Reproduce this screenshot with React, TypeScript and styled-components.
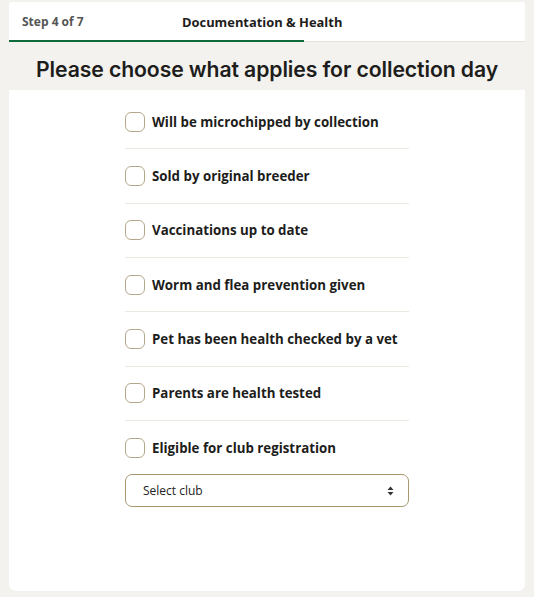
import React from 'react';
import styled, { createGlobalStyle } from 'styled-components';

const GlobalStyle = createGlobalStyle`
  body {
    margin: 0;
    background: #f3f2ee;
    font-family: "Open Sans", "Liberation Sans", sans-serif;
    color: #1d1d1b;
  }
`;

const Page = styled.div`
  padding: 2px 9px 6px;
  display: flex;
  flex-direction: column;
  height: 597px;
  box-sizing: border-box;
`;

const Header = styled.div`
  position: relative;
  background: #fff;
  height: 40px;
  border-bottom: 1px solid #e6e3de;
  border-radius: 3px 3px 0 0;
  display: flex;
  align-items: center;
  box-sizing: border-box;
  padding: 0 0 0 13px;
`;

const StepLabel = styled.span`
  font-size: 12px;
  font-weight: 700;
  color: #555;
  width: 160px;
`;

const StepTitle = styled.span`
  font-size: 12.9px;
  font-weight: 700;
  color: #1d1d1b;
`;

const Progress = styled.div`
  position: absolute;
  left: 0;
  bottom: -1px;
  height: 2px;
  background: #0d6a3a;
`;

const Heading = styled.h1`
  margin: 0;
  height: 48px;
  padding-top: 6px;
  box-sizing: border-box;
  display: flex;
  align-items: center;
  justify-content: center;
  font-family: Inter, sans-serif;
  font-size: 21.2px;
  font-weight: 600;
  letter-spacing: -0.1px;
  color: #1d1d1b;
`;

const Card = styled.div`
  flex: 1;
  background: #fff;
  border-radius: 0 0 7px 7px;
  padding-top: 5px;
`;

const List = styled.div`
  width: 284px;
  margin: 0 auto;
`;

const Row = styled.label<{ last?: boolean }>`
  display: flex;
  align-items: center;
  gap: 7px;
  padding: 16.67px 0;
  border-bottom: ${(p) => (p.last ? 'none' : '1px solid #ece8e2')};
`;

const Box = styled.span`
  width: 20px;
  height: 20px;
  box-sizing: border-box;
  border: 1.5px solid #b5a78b;
  border-radius: 6px;
  flex-shrink: 0;
`;

const Label = styled.span`
  font-size: 13.3px;
  font-weight: 700;
  line-height: 20px;
`;

const Select = styled.div`
  height: 33px;
  box-sizing: border-box;
  border: 1px solid #a8976f;
  border-radius: 7px;
  display: flex;
  align-items: center;
  justify-content: space-between;
  padding: 0 14px 0 17px;
  font-size: 12px;
  color: #222;
`;

const items = [
  'Will be microchipped by collection',
  'Sold by original breeder',
  'Vaccinations up to date',
  'Worm and flea prevention given',
  'Pet has been health checked by a vet',
  'Parents are health tested',
  'Eligible for club registration',
];

const Arrows = () => (
  <svg width="7" height="10" viewBox="0 0 7 10">
    <path d="M3.5 0.5 L6.5 4 H0.5 Z" fill="#333" />
    <path d="M3.5 9.5 L6.5 6 H0.5 Z" fill="#333" />
  </svg>
);

const App: React.FC = () => {
  const step = 4;
  const total = 7;
  return (
    <>
      <GlobalStyle />
      <Page>
        <Header>
          <StepLabel>Step {step} of {total}</StepLabel>
          <StepTitle>Documentation &amp; Health</StepTitle>
          <Progress style={{ width: `${(step / total) * 100}%` }} />
        </Header>
        <Heading>Please choose what applies for collection day</Heading>
        <Card>
          <List>
            {items.map((text, i) => (
              <Row key={text} last={i === items.length - 1}>
                <Box />
                <Label>{text}</Label>
              </Row>
            ))}
            <Select>
              <span>Select club</span>
              <Arrows />
            </Select>
          </List>
        </Card>
      </Page>
    </>
  );
};

export default App;
